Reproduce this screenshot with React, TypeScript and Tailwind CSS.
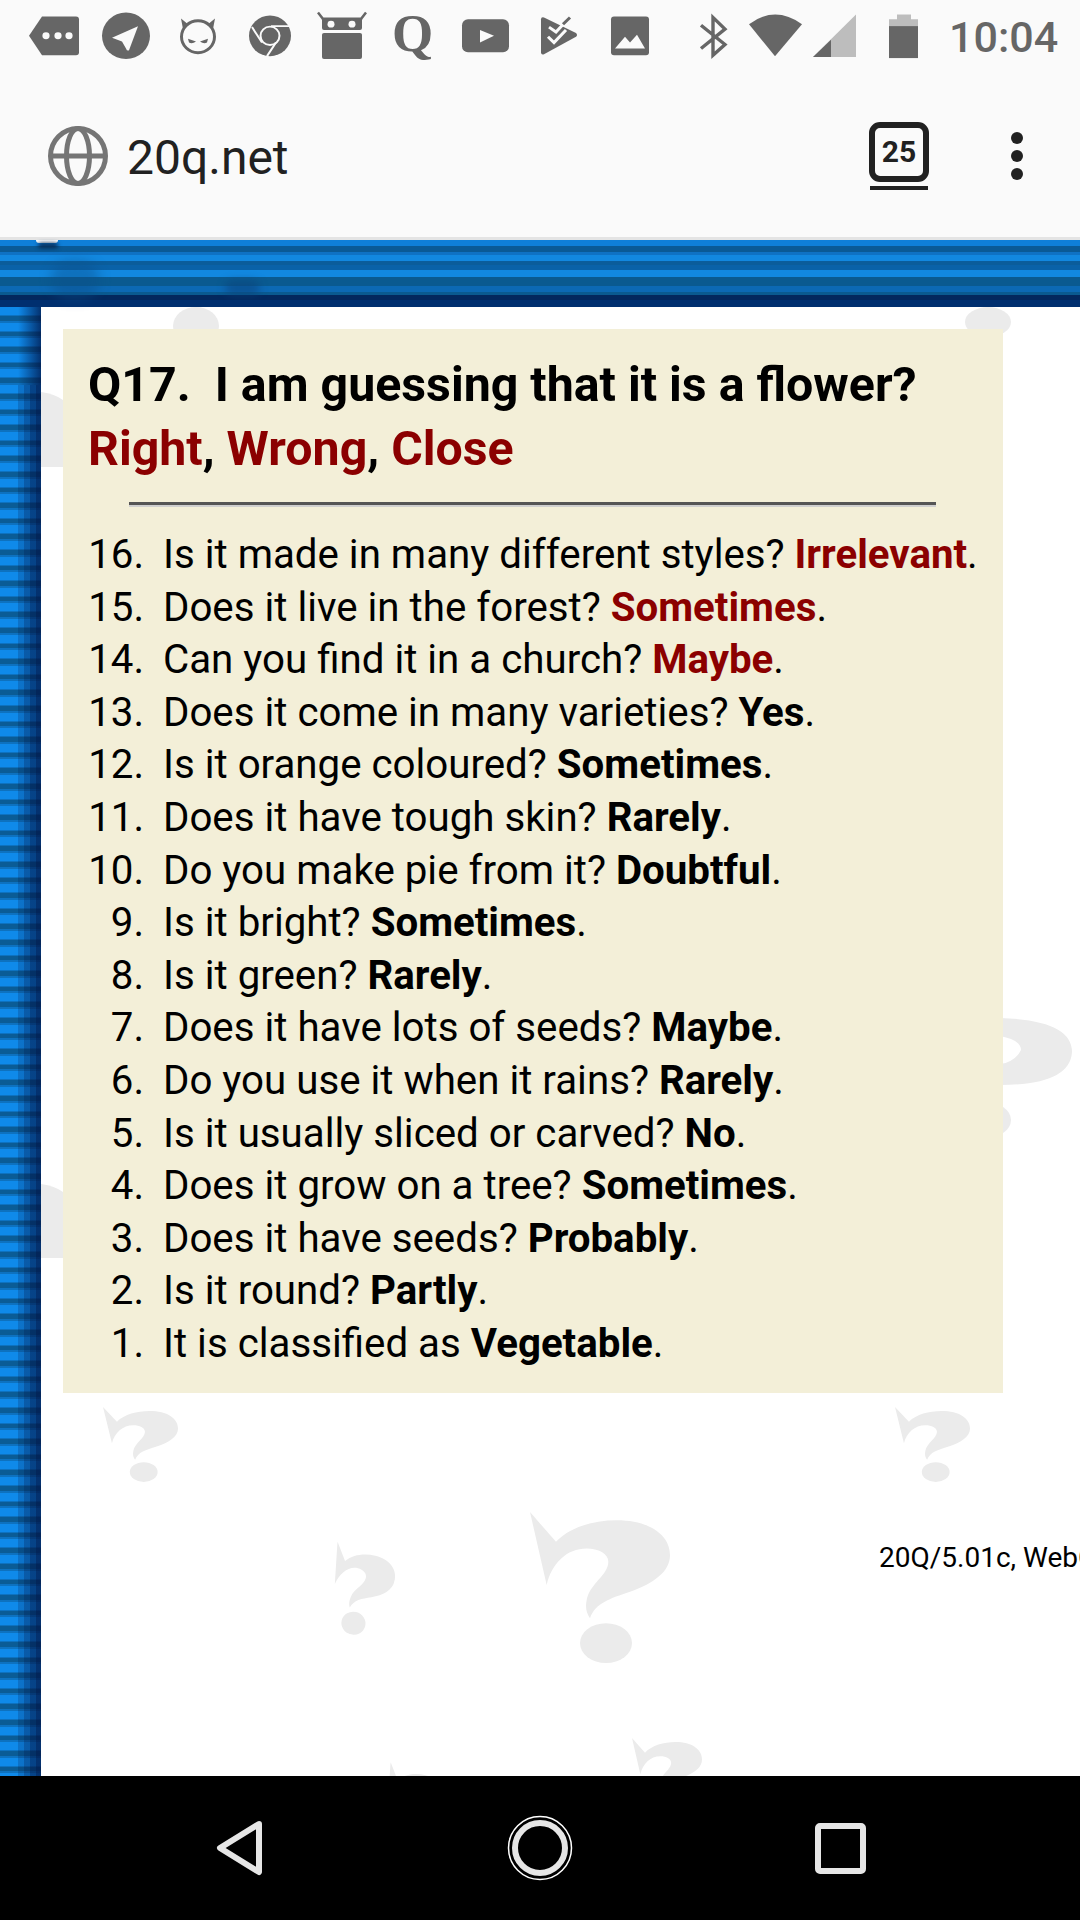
import React from "react";

const font = { fontFamily: "Roboto, sans-serif" };

const rows: { n: number; q: string; a: string; red?: boolean }[] = [
  { n: 16, q: "Is it made in many different styles?", a: "Irrelevant", red: true },
  { n: 15, q: "Does it live in the forest?", a: "Sometimes", red: true },
  { n: 14, q: "Can you find it in a church?", a: "Maybe", red: true },
  { n: 13, q: "Does it come in many varieties?", a: "Yes" },
  { n: 12, q: "Is it orange coloured?", a: "Sometimes" },
  { n: 11, q: "Does it have tough skin?", a: "Rarely" },
  { n: 10, q: "Do you make pie from it?", a: "Doubtful" },
  { n: 9, q: "Is it bright?", a: "Sometimes" },
  { n: 8, q: "Is it green?", a: "Rarely" },
  { n: 7, q: "Does it have lots of seeds?", a: "Maybe" },
  { n: 6, q: "Do you use it when it rains?", a: "Rarely" },
  { n: 5, q: "Is it usually sliced or carved?", a: "No" },
  { n: 4, q: "Does it grow on a tree?", a: "Sometimes" },
  { n: 3, q: "Does it have seeds?", a: "Probably" },
  { n: 2, q: "Is it round?", a: "Partly" },
  { n: 1, q: "It is classified as", a: "Vegetable" },
];

// background watermark, drawn in page coordinates
function Watermark() {
  const marks = [
    { x: 103, y: 1407, w: 75, h: 75, r: 0 },
    { x: 895, y: 1407, w: 75, h: 75, r: 0 },
    { x: 530, y: 1512, w: 140, h: 151, r: 0 },
    { x: 326, y: 1548, w: 65, h: 87, r: 14 },
    { x: 632, y: 1738, w: 70, h: 75, r: 0 },
    { x: 380, y: 1768, w: 60, h: 80, r: 14 },
  ];
  return (
    <svg className="absolute left-0 top-0" width="1039" height="1469" viewBox="41 307 1039 1469">
      <defs>
        <symbol id="qm" viewBox="150 95 420 455" preserveAspectRatio="none">
          <path
            fill="#ebebeb"
            d="M150 95 L228 185 C270 140 340 120 410 120 C510 120 570 165 570 225 C570 275 520 310 450 335 C390 355 345 370 330 415 C320 400 315 385 320 360 C330 310 385 285 385 245 C385 220 355 205 320 205 C260 205 215 250 200 315 Z"
          />
          <ellipse cx="378" cy="490" rx="78" ry="60" fill="#ebebeb" />
        </symbol>
      </defs>
      {marks.map((m, i) => (
        <use
          key={i}
          href="#qm"
          x={m.x}
          y={m.y}
          width={m.w}
          height={m.h}
          transform={`rotate(${m.r} ${m.x + m.w / 2} ${m.y + m.h / 2})`}
        />
      ))}
      <g fill="#ebebeb">
        <ellipse cx="196" cy="326" rx="23" ry="19" />
        <ellipse cx="988" cy="322" rx="23" ry="15" />
        <path d="M41 392 Q55 394 63 400 V467 H41 Z" />
        <path d="M41 1184 Q55 1186 63 1192 V1258 H41 Z" />
        <path
          fillRule="evenodd"
          d="M1000 1018 Q1072 1020 1072 1052 Q1070 1085 1000 1085 Z M1000 1036 Q1021 1040 1021 1050 Q1015 1062 1000 1064 Z"
        />
        <ellipse cx="985" cy="1120" rx="26" ry="18" />
      </g>
    </svg>
  );
}

function StatusIcons() {
  return (
    <svg className="absolute left-0 top-0" width="1080" height="72" viewBox="0 0 1080 72" fill="#666666">
      <g transform="scale(1 0.968)">
        {/* tag with dots */}
        <path d="M29 37 L42 17 H76 Q79 17 79 20 V54 Q79 57 76 57 H42 Z" />
        <circle cx="46" cy="37" r="3.6" fill="#fafafa" />
        <circle cx="58" cy="37" r="3.6" fill="#fafafa" />
        <circle cx="69" cy="37" r="3.6" fill="#fafafa" />
        {/* send */}
        <circle cx="126" cy="37" r="24" />
        <path d="M112 39 L138 27 L129 52 Q127 53 126 50 L122 43 Z" fill="#fafafa" />
        {/* devil */}
        <circle cx="198" cy="38" r="16.5" fill="none" stroke="#666666" strokeWidth="3" />
        <path d="M181 19 L188 25 L183 30 Z M215 19 L208 25 L213 30 Z" />
        <path d="M188 40 L196 43 Q192 46 189 44 Z M208 40 L200 43 Q204 46 207 44 Z" />
        {/* chrome */}
        <circle cx="270" cy="37" r="21" />
        <circle cx="270" cy="37" r="9.5" fill="none" stroke="#fafafa" strokeWidth="2" />
        <path d="M271 27 H290 M252 28 L262 44 M276 44 L267 58" stroke="#fafafa" strokeWidth="2" fill="none" />
        {/* f-droid */}
        <path d="M318 13 L324 21 H360 L366 13" fill="none" stroke="#666666" strokeWidth="2.5" />
        <rect x="322" y="18" width="40" height="13" rx="2" />
        <circle cx="331" cy="25" r="3.5" fill="#fafafa" />
        <circle cx="352" cy="25" r="3.5" fill="#fafafa" />
        <rect x="322" y="34" width="40" height="27" rx="2" />
        {/* youtube */}
        <rect x="462" y="20" width="47" height="34" rx="6" />
        <path d="M480 31 L494 37 L480 44 Z" fill="#fafafa" />
        {/* check tag */}
        <path d="M541 20 Q541 17 544 18 L576 34 Q578 36 576 38 L544 56 Q541 57 541 54 Z" />
        <path d="M549 28 L556 33 L566 22 M548 38 L554 44 L566 31" fill="none" stroke="#fafafa" strokeWidth="3" />
        <path d="M563 25 L570 18" fill="none" stroke="#666666" strokeWidth="3" />
        {/* image */}
        <rect x="611" y="17" width="38" height="40" rx="3" />
        <path d="M615 50 L625 38 L630 44 L637 36 L645 50 Z" fill="#fafafa" />
        {/* bluetooth */}
        <path d="M701 26 L725 46 L713 57 V18 L725 30 L701 50" fill="none" stroke="#666666" strokeWidth="3.4" />
        {/* wifi */}
        <path d="M749 25 Q775 5 802 25 L775 58 Z" />
        {/* signal */}
        <path d="M856 15 V59 H813 Z" fill="#bdbdbd" />
        <path d="M831 41 V59 H813 Z" />
        {/* battery */}
        <path d="M897 15 H911 V20 H918 V60 H889 V20 H897 Z" fill="#bdbdbd" />
        <rect x="889" y="27" width="29" height="33" />
      </g>
    </svg>
  );
}

function NavIcons() {
  return (
    <svg width="1080" height="144" viewBox="0 0 1080 144" fill="none" stroke="#e6e6e6">
      <path d="M259 48 L220 72 L259 96 Z" strokeWidth="6" strokeLinejoin="round" />
      <circle cx="540" cy="72" r="31.5" stroke="#ffffff" strokeWidth="1.5" />
      <circle cx="540" cy="72" r="25" strokeWidth="6" />
      <rect x="818" y="50" width="45" height="45" rx="2" strokeWidth="6" />
    </svg>
  );
}

export default function App() {
  return (
    <div className="w-[1080px] h-[1920px] overflow-hidden flex flex-col bg-white" style={font}>
      {/* browser chrome */}
      <div className="relative h-[240px] shrink-0 bg-[#fafafa] border-b-[3px] border-[#e4e4e4]">
        <StatusIcons />
        <span
          className="absolute left-[392px] top-[1px] text-[53px] leading-[64px] font-bold text-[#666666]"
          style={{ fontFamily: "'Liberation Serif', serif" }}
        >
          Q
        </span>
        <span className="absolute left-[949px] top-[13px] text-[43px] leading-[48px] font-medium text-[#666666]">
          10:04
        </span>
        <div className="absolute left-0 right-0 top-[121px] h-[70px] flex items-center">
          <svg className="ml-[48px]" width="60" height="60" viewBox="0 0 60 60" fill="none" stroke="#757575" strokeWidth="5">
            <circle cx="30" cy="30" r="27.5" />
            <ellipse cx="30" cy="30" rx="11.5" ry="27.5" />
            <path d="M3 30 H57" />
          </svg>
          <span className="ml-[19px] mt-[4px] text-[48px] leading-[70px] text-[#212121]">20q.net</span>
          <div className="ml-auto mr-[151px] w-[60px] flex flex-col items-center">
            <div className="w-[60px] h-[60px] border-[6.5px] border-[#212121] rounded-[11px] flex items-center justify-center text-[30px] leading-none font-bold text-[#212121]">
              25
            </div>
            <div className="mt-[4px] w-[58px] h-[4px] bg-[#212121]" />
          </div>
        </div>
        <div className="absolute left-[1011px] top-[132px] flex flex-col gap-[6px]">
          <div className="w-[12px] h-[12px] rounded-full bg-[#212121]" />
          <div className="w-[12px] h-[12px] rounded-full bg-[#212121]" />
          <div className="w-[12px] h-[12px] rounded-full bg-[#212121]" />
        </div>
      </div>

      {/* page */}
      <div className="flex-1 flex flex-col min-h-0">
        <div className="relative h-[67px] shrink-0 bg-[linear-gradient(180deg,#0f7fd8_0px,#0f7fd8_6px,#0a5a96_6px,#0a5a96_12px,#0f72c4_12px,#0f72c4_15px,#1288e0_15px,#1288e0_21px,#0b5d9b_21px,#0b5d9b_25px,#0a62a8_25px,#0a62a8_30px,#1288e0_30px,#1288e0_37px,#0a5a90_37px,#0a5a90_46px,#0c69b4_46px,#0c69b4_52px,#0a5a90_52px,#0a5a90_55px,#03285e_55px,#03285e_60px,#002f6f_60px,#002f6f_67px)]">
          <div className="absolute left-[36px] top-0 w-[22px] h-[3px] rounded-b-full bg-white" />
          <div className="absolute left-[38px] top-[3px] w-[20px] h-[5px] rounded-full bg-[#06264f] blur-[2px]" />
          <div className="absolute left-[50px] top-[20px] w-[50px] h-[40px] rounded-full bg-[#0a4f8a] opacity-40 blur-[6px]" />
          <div className="absolute left-[225px] top-[40px] w-[35px] h-[16px] rounded-full bg-[#0a3f78] opacity-50 blur-[4px]" />
        </div>
        <div className="flex-1 flex min-h-0">
          <div className="relative w-[41px] shrink-0 bg-[repeating-linear-gradient(180deg,#0f8aea_0px,#0f8aea_8px,#0d72c0_8px,#0d72c0_9px,#0a5c96_9px,#0a5c96_13.5px,#0d72c0_13.5px,#0d72c0_15.6px)]">
            <div className="absolute left-0 right-0 top-0 h-[78px] bg-[linear-gradient(90deg,transparent_18px,rgba(0,20,70,0.75)_41px)]" />
            <div className="absolute left-0 right-0 top-[78px] bottom-0 bg-[linear-gradient(90deg,transparent_0px,transparent_18px,rgba(0,20,70,0.2)_18px,rgba(0,20,70,0.2)_24px,rgba(0,20,70,0.4)_24px,rgba(0,20,70,0.4)_30px,rgba(0,20,70,0.6)_30px,rgba(0,20,70,0.6)_36px,rgba(0,20,70,0.75)_36px,rgba(0,20,70,0.75)_41px)]" />
          </div>
          <div className="relative flex-1 min-w-0 overflow-hidden">
            <Watermark />
            <div className="relative ml-[22px] mt-[22px] w-[940px] h-[1064px] bg-[#f3efd8] pl-[25px] text-black">
              <div className="pt-[24px] text-[48.3px] leading-[64px] font-bold whitespace-pre">
                <div>Q17.  I am guessing that it is a flower?</div>
                <div>
                  <span className="text-[#8b0000]">Right</span>, <span className="text-[#8b0000]">Wrong</span>,{" "}
                  <span className="text-[#8b0000]">Close</span>
                </div>
              </div>
              <div className="mt-[21px] ml-[41px] w-[807px] h-[5px] border-t-[3px] border-b-[2px] border-t-[#555555] border-b-[#cfcfcf]" />
              <div className="mt-[22px] text-[40.25px] leading-[52.6px]">
                {rows.map((r) => (
                  <div key={r.n} className="flex whitespace-nowrap">
                    <span className="w-[56px] text-right shrink-0">{r.n}.</span>
                    <span className="ml-[19px]">
                      {r.q} <b className={r.red ? "font-bold text-[#8b0000]" : "font-bold"}>{r.a}</b>.
                    </span>
                  </div>
                ))}
              </div>
            </div>
            <div className="relative mt-[147px] ml-[838px] text-[28px] leading-[36px] text-black whitespace-nowrap">
              20Q/5.01c, WebOrb
            </div>
          </div>
        </div>
      </div>

      {/* android nav bar */}
      <div className="h-[144px] shrink-0 bg-black">
        <NavIcons />
      </div>
    </div>
  );
}
